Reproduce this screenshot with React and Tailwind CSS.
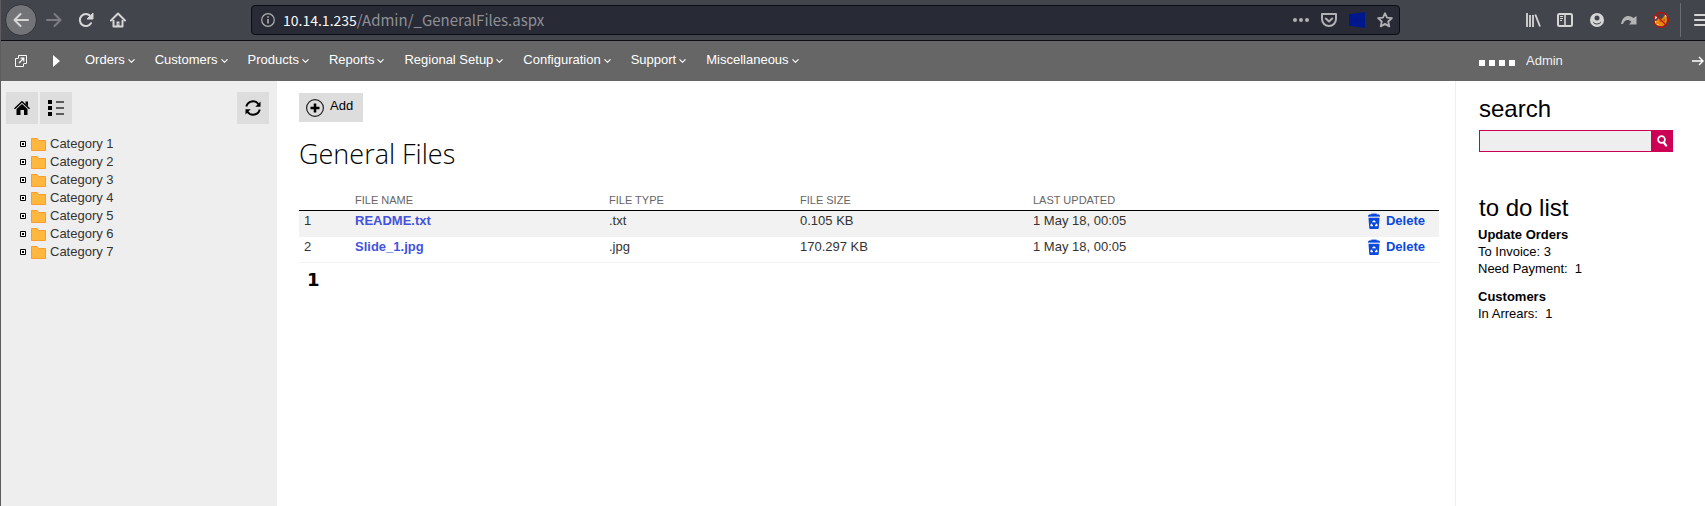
import React from "react";

const MENU = [
  "Orders",
  "Customers",
  "Products",
  "Reports",
  "Regional Setup",
  "Configuration",
  "Support",
  "Miscellaneous",
];

const CATEGORIES = [1, 2, 3, 4, 5, 6, 7].map((n) => `Category ${n}`);

const FILES = [
  { id: 1, name: "README.txt", type: ".txt", size: "0.105 KB", updated: "1 May 18, 00:05" },
  { id: 2, name: "Slide_1.jpg", type: ".jpg", size: "170.297 KB", updated: "1 May 18, 00:05" },
];

function Icon({ className = "size-4", viewBox = "0 0 16 16", children }) {
  return (
    <svg className={`shrink-0 ${className}`} viewBox={viewBox} fill="none" aria-hidden="true">
      {children}
    </svg>
  );
}

function BrowserBar() {
  return (
    <header className="flex h-[41px] items-center border-b border-[#0d0e12] bg-[#42454c] pl-1 text-[#d6d6d6]">
      <button aria-label="Back" className="flex size-8 items-center justify-center rounded-full border border-[#303238] bg-[#737478]">
        <Icon>
          <path d="M15 8H1.500M7.500 2L1.500 8l6 6" stroke="currentColor" strokeWidth="2" strokeLinecap="round" strokeLinejoin="round" />
        </Icon>
      </button>
      <button aria-label="Forward" className="ml-[9px] text-[#7c7d82]">
        <Icon>
          <path d="M1 8h13.500M8.500 2l6 6-6 6" stroke="currentColor" strokeWidth="2" strokeLinecap="round" strokeLinejoin="round" />
        </Icon>
      </button>
      <button aria-label="Reload" className="ml-4">
        <Icon>
          <path d="M13 11.200A6 6 0 1 1 12.300 4" stroke="currentColor" strokeWidth="2" strokeLinecap="round" />
          <path d="M15 1v6H9z" fill="currentColor" stroke="currentColor" strokeLinejoin="round" />
        </Icon>
      </button>
      <button aria-label="Home" className="ml-4">
        <Icon>
          <path d="M1 8.500L8 1.500l7 7" stroke="currentColor" strokeWidth="2" strokeLinecap="round" strokeLinejoin="round" />
          <path d="M3.500 8v6.500h9V8" stroke="currentColor" strokeWidth="2" strokeLinejoin="round" />
          <path d="M6.500 9.500h3V15h-3z" fill="currentColor" />
          <path d="M7.800 11.500h1v1h-1z" fill="#42454c" />
        </Icon>
      </button>
      <div className="ml-[125px] flex h-[30px] flex-1 items-center rounded-[4px] border border-[#0c0c12] bg-[#282a36] pr-[6px] pl-[9px] text-[#b1b1b3]">
        <Icon className="size-[14px]" viewBox="0 0 14 14">
          <circle cx="7" cy="7" r="6.300" stroke="currentColor" strokeWidth="1.200" />
          <path d="M7 6v4.500" stroke="currentColor" strokeWidth="1.600" />
          <path d="M7 3.200v1.600" stroke="currentColor" strokeWidth="1.600" />
        </Icon>
        <a href="#address" className="ml-2 flex-1 font-['Noto_Sans_CJK_SC','Noto_Sans',sans-serif] text-[15px] leading-5 text-[#8f9097]">
          <span className="text-sm text-[#f9f9fa]">10.14.1.235</span>/Admin/_GeneralFiles.aspx
        </a>
        <div className="flex gap-3">
          <button aria-label="Page actions">
            <Icon>
              <circle cx="2" cy="8" r="2" fill="currentColor" />
              <circle cx="8" cy="8" r="2" fill="currentColor" />
              <circle cx="14" cy="8" r="2" fill="currentColor" />
            </Icon>
          </button>
          <button aria-label="Save to Pocket">
            <Icon>
              <path d="M1 2h14v5a7 7 0 0 1-14 0z" stroke="currentColor" strokeWidth="2" strokeLinejoin="round" />
              <path d="M4.800 6.500L8 9.500l3.200-3" stroke="currentColor" strokeWidth="2" strokeLinecap="round" strokeLinejoin="round" />
            </Icon>
          </button>
          <button aria-label="User agent">
            <Icon>
              <path d="M0 2.200L16 0v16L0 13.800z" fill="#00188f" />
              <path d="M6.800 1.300v13.400M0 8h16" stroke="#0a1670" strokeWidth=".5" />
            </Icon>
          </button>
          <button aria-label="Bookmark">
            <Icon>
              <path d="M8 1.200l2 4.500 4.900.5-3.700 3.300 1.100 4.900L8 11.900l-4.300 2.500 1.100-4.900L1.100 6.200 6 5.700z" stroke="currentColor" strokeWidth="1.800" strokeLinejoin="round" />
            </Icon>
          </button>
        </div>
      </div>
      <div className="ml-[125px] flex items-center gap-4">
        <button aria-label="Library">
          <Icon>
            <path d="M2 1v14M5 3v12M8 3v12" stroke="currentColor" strokeWidth="1.800" />
            <path d="M10.300 2.500L15 14.500" stroke="currentColor" strokeWidth="1.800" />
          </Icon>
        </button>
        <button aria-label="Sidebars">
          <Icon>
            <rect x="1" y="2" width="14" height="12" rx="1.500" stroke="currentColor" strokeWidth="2" />
            <path d="M8 2v12" stroke="currentColor" strokeWidth="1.600" />
            <path d="M3 4.500h3M3 6.500h3M3 8.500h2" stroke="currentColor" />
          </Icon>
        </button>
        <button aria-label="Account">
          <Icon>
            <circle cx="8" cy="8" r="7" fill="currentColor" />
            <circle cx="8" cy="6" r="2.500" fill="#42454c" />
            <path d="M3.800 9c1 3.200 7.400 3.200 8.400 0 .3 4.500-8.700 4.500-8.400 0z" fill="#42454c" />
          </Icon>
        </button>
        <button aria-label="Share" className="text-[#b4b4b4]">
          <Icon>
            <path d="M0 12C1.500 3.500 8 2 12.500 6L15.500 4v8.500H8l2.300-2.700C7.500 6.800 3.500 7.500 2 12z" fill="currentColor" />
          </Icon>
        </button>
        <button aria-label="Proxy disabled">
          <Icon>
            <path d="M3 9l3-3 3 1 3-4 1.500 2 .5 3-1 4-4 2.500-5-1-2-2z" fill="#e8890c" />
            <path d="M1 4.500l1.500-1 2 2-2.500 2zM11.500 2.500l3 1-1.500 2zM1.500 8.500l2 1-1 2zM3.500 12.500l2-.5v1.500z" fill="#f4e9dc" />
            <path d="M6.500 9H8M10.500 8h1.500" stroke="#7a3208" />
            <circle cx="8" cy="8" r="7.300" stroke="#cc0808" strokeWidth="1.200" />
            <path d="M3 3l10 10" stroke="#cc0808" strokeWidth="1.200" />
          </Icon>
        </button>
      </div>
      <div className="ml-[11px] h-[34px] border-l border-[#6b6d72]" />
      <button aria-label="Open menu" className="ml-[13px] flex w-[11px] justify-start overflow-hidden">
        <Icon>
          <path d="M1 3h14M1 8h14M1 13h14" stroke="currentColor" strokeWidth="2" strokeLinecap="round" />
        </Icon>
      </button>
    </header>
  );
}

function NavBar() {
  return (
    <nav className="flex h-10 items-center bg-[#666] pl-[14px] text-white">
      <a href="#site" aria-label="Open site">
        <Icon className="size-3" viewBox="0 0 12 12">
          <path d="M3.500 3.500h-3v8h8v-3" stroke="currentColor" />
          <path d="M3.500 3V.5h8v8H9" stroke="currentColor" />
          <path d="M4 8l4.500-4.500M5.500 3.200h3.300v3.300" stroke="currentColor" strokeWidth="1.200" />
        </Icon>
      </a>
      <button aria-label="Expand" className="ml-[26px]">
        <Icon className="h-3 w-[7px]" viewBox="0 0 7 12">
          <path d="M0 0l7 6-7 6z" fill="currentColor" />
        </Icon>
      </button>
      <ul className="mb-[2px] ml-[25px] flex flex-1 gap-5">
        {MENU.map((label) => (
          <li key={label}>
            <button className="flex items-center gap-[3px]">
              {label}
              <Icon className="mt-[2px] h-1 w-[7px]" viewBox="0 0 7 4">
                <path d="M.5 .3l3 3 3-3" stroke="currentColor" strokeWidth="1.100" />
              </Icon>
            </button>
          </li>
        ))}
      </ul>
      <div className="flex w-[226px] items-center">
        <div className="mt-1 flex gap-1">
          {[0, 1, 2, 3].map((n) => (
            <span key={n} className="size-[6px] bg-white" />
          ))}
        </div>
        <a href="#account" className="ml-[11px] flex-1 text-[#f0f0f0]">Admin</a>
        <button aria-label="Sign out" className="mr-px">
          <Icon className="size-3" viewBox="0 0 12 12">
            <path d="M0 6h11M7 2l4 4-4 4" stroke="currentColor" strokeWidth="1.400" />
          </Icon>
        </button>
      </div>
    </nav>
  );
}

function CategoryPanel() {
  const tile = "flex size-8 items-center justify-center bg-[#ddd] text-black";
  return (
    <aside className="w-[276px] shrink-0 bg-[#eee] pt-[11px] pr-2 pl-[5px]">
      <div className="flex gap-[2px]">
        <button aria-label="Home" className={tile}>
          <Icon>
            <path d="M.5 8.700L8 1.700l7.500 7" stroke="currentColor" strokeWidth="1.500" />
            <path d="M11.500 1.500H14v4.800l-2.500-2.300z" fill="currentColor" />
            <path d="M2.500 9L8 4l5.500 5v6H10v-5H6.500v5h-4z" fill="currentColor" />
          </Icon>
        </button>
        <button aria-label="List view" className={tile}>
          <Icon>
            <path d="M0 0h4v4H0zM0 6h4v4H0zM0 12h4v4H0z" fill="currentColor" />
            <path d="M8 2h8M8 8h8M8 14h8" stroke="#333" strokeWidth="1.600" />
          </Icon>
        </button>
        <button aria-label="Refresh" className={`${tile} ml-auto`}>
          <Icon>
            <path d="M1.300 6.500A6.800 6.800 0 0 1 13.500 4.200M14.700 9.500A6.800 6.800 0 0 1 2.500 11.800" stroke="currentColor" strokeWidth="2" />
            <path d="M15.500 1.500v5.200h-5.200zM.5 14.500V9.300h5.200z" fill="currentColor" />
          </Icon>
        </button>
      </div>
      <ul className="mt-[11px] pl-[14px]">
        {CATEGORIES.map((name) => (
          <li key={name} className="flex h-[18px] items-center">
            <button aria-label={`Expand ${name}`}>
              <Icon className="size-[6px]" viewBox="0 0 6 6">
                <path d="M.5 .5h5v5h-5z" stroke="#000" fill="#fff" />
                <path d="M2 2h2v2H2z" fill="#000" />
              </Icon>
            </button>
            <a href="#category" className="ml-[5px] flex items-center gap-1 text-[#333]">
              <Icon className="mt-px h-[13px] w-[15px]" viewBox="0 0 15 13">
                <path d="M.5 .5h5.500l1.500 2h7v10H.5z" fill="#ffb83d" stroke="#ff9a2e" />
              </Icon>
              {name}
            </a>
          </li>
        ))}
      </ul>
    </aside>
  );
}

function TrashIcon() {
  return (
    <Icon className="h-4 w-3" viewBox="0 0 12 16">
      <path d="M3.500 1.500V.7h5v.8M0 3.500c0-1.500 1-2 2.500-2h7c1.500 0 2.500.5 2.500 2z" fill="#0b49dc" stroke="#0b49dc" strokeWidth=".3" />
      <path d="M.5 4.800h11l-.7 9.700c0 1-.6 1.500-1.500 1.500H2.700c-.9 0-1.500-.5-1.500-1.500z" fill="#0b49dc" />
      <path d="M4.600 9.300L6 7.900l1.400 1.400M8.400 10.700l.6 1.800H7M5 12.500H3l.6-1.800" stroke="#fff" strokeWidth="1.300" strokeLinejoin="round" />
    </Icon>
  );
}

function FilesTable() {
  return (
    <table className="mt-[17px] w-full table-fixed border-collapse text-left text-[#333]">
      <colgroup>
        <col className="w-14" />
        <col className="w-[254px]" />
        <col className="w-[191px]" />
        <col className="w-[233px]" />
        <col />
      </colgroup>
      <thead>
        <tr className="h-[19px] border-b border-black align-middle text-[11px] leading-[18px] text-[#666] uppercase">
          <th />
          <th className="font-normal">File name</th>
          <th className="font-normal">File type</th>
          <th className="font-normal">File size</th>
          <th className="font-normal">Last updated</th>
          <th />
        </tr>
      </thead>
      <tbody>
        {FILES.map((file) => (
          <tr key={file.id} className="h-[26px] border-b border-[#f2f2f2] align-top leading-5 odd:bg-[#f2f2f2]">
            <td className="pl-[5px]">{file.id}</td>
            <td>
              <a href="#file" className="font-bold text-[#4453dc]">{file.name}</a>
            </td>
            <td>{file.type}</td>
            <td>{file.size}</td>
            <td>{file.updated}</td>
            <td className="pr-[14px]">
              <button className="ml-auto flex items-center gap-[6px] font-bold text-[#0b49dc]">
                <TrashIcon />
                Delete
              </button>
            </td>
          </tr>
        ))}
      </tbody>
    </table>
  );
}

function SidePanel() {
  const heading = "text-2xl leading-7 text-black";
  return (
    <aside className="w-[250px] shrink-0 border-l border-[#eee] pt-[14px] pl-[22px] leading-[17px] text-black">
      <h2>
        <label htmlFor="search" className={`${heading} block pl-px`}>search</label>
      </h2>
      <form className="mt-[7px] mr-8 ml-px flex h-[22px]">
        <input id="search" type="text" className="min-w-0 flex-1 border border-r-0 border-[#c9004f] bg-[#eee] px-1 outline-none" />
        <button type="button" aria-label="Search" className="flex w-[22px] items-center justify-center bg-[#cc0054] text-white">
          <Icon className="h-3 w-[11px]" viewBox="0 0 11 12">
            <circle cx="4.500" cy="4.500" r="3.400" stroke="currentColor" strokeWidth="1.800" />
            <path d="M6.500 7l3.200 4.300" stroke="currentColor" strokeWidth="2.200" />
          </Icon>
        </button>
      </form>
      <h2 className={`${heading} mt-[42px] pl-px`}>to do list</h2>
      <h3 className="mt-1 font-bold">Update Orders</h3>
      <p>To Invoice: 3</p>
      <p>Need Payment:{"\u00a0 "}1</p>
      <h3 className="mt-[11px] font-bold">Customers</h3>
      <p>In Arrears:{"\u00a0 "}1</p>
    </aside>
  );
}

export default function App() {
  return (
    <div className="flex min-h-screen flex-col overflow-hidden border-l border-[#5e5c5e] bg-white font-['Liberation_Sans',Arial,sans-serif] text-[13px]">
      <BrowserBar />
      <NavBar />
      <div className="flex flex-1">
        <CategoryPanel />
        <main className="min-w-0 flex-1 pt-3 pr-4 pl-[22px]">
          <button className="flex h-[29px] items-center gap-[6px] bg-[#ddd] pr-[10px] pl-[7px] text-black">
            <Icon className="size-[18px]" viewBox="0 0 18 18">
              <circle cx="9" cy="9" r="8.400" stroke="#222" strokeWidth="1.200" />
              <path d="M9 4.500v9M4.500 9h9" stroke="#000" strokeWidth="2.600" />
            </Icon>
            <span className="mb-1">Add</span>
          </button>
          <h1 className="mt-3 font-['Open_Sans',sans-serif] text-[27px] leading-10 font-light text-black">General Files</h1>
          <FilesTable />
          <p className="mt-[3px] pl-2 font-['DejaVu_Sans',sans-serif] text-[18px] leading-7 font-bold text-black">1</p>
        </main>
        <SidePanel />
      </div>
    </div>
  );
}
